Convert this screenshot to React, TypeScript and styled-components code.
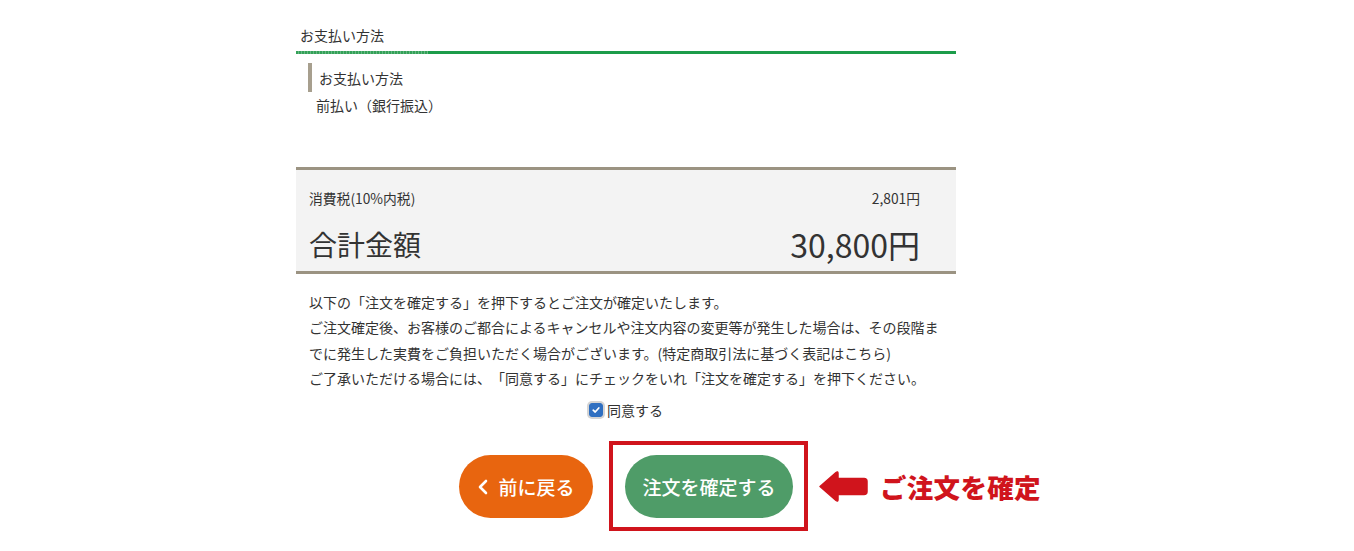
import React, { useState } from "react";
import styled, { createGlobalStyle } from "styled-components";

const GlobalStyle = createGlobalStyle`
  html, body {
    margin: 0;
    padding: 0;
    background: #ffffff;
  }
  body {
    font-family: "Noto Sans CJK JP", "Noto Sans", sans-serif;
    color: #333333;
  }
  * { box-sizing: border-box; }
`;

const Page = styled.div`
  width: 660px;
  margin-left: 296px;
  padding-top: 25px;
  padding-bottom: 30px;
`;

const SectionTitle = styled.div`
  font-size: 14px;
  line-height: 20px;
  padding: 0 4px 6px;
  color: #333;
`;

const TabLine = styled.div`
  position: relative;
  height: 3px;
  background: #1c9c4a;
  &::before {
    content: "";
    position: absolute;
    left: 0;
    top: 0;
    width: 132px;
    height: 3px;
    background: repeating-linear-gradient(90deg, #34a158 0 2px, #66b883 2px 3px);
  }
`;

const PaymentBlock = styled.div`
  padding-top: 9px;
  padding-bottom: 52px;
`;

const SubHeading = styled.div`
  margin-left: 12px;
  border-left: 4px solid #a79f8e;
  padding-left: 7px;
  height: 29px;
  display: flex;
  align-items: center;
  font-size: 14px;
  color: #333;
`;

const PaymentValue = styled.div`
  margin: 3px 0 0 20px;
  font-size: 14px;
  line-height: 20px;
  color: #333;
`;

const Summary = styled.div`
  background: #f3f3f3;
  border-top: 3px solid #9b9382;
  border-bottom: 3px solid #9b9382;
  padding: 18px 36px 7px 13px;
  display: flex;
  flex-direction: column;
  gap: 16px;
`;

const SummaryRow = styled.div`
  display: flex;
  justify-content: space-between;
  align-items: center;
`;

const SmallLabel = styled.span`
  font-size: 13.8px;
  line-height: 20px;
  color: #333;
`;

const BigLabel = styled.span<{ $size: number }>`
  font-size: ${(p) => p.$size}px;
  line-height: 40px;
  color: #333;
`;

const Notice = styled.div`
  padding: 16px 11px 0 13px;
  font-size: 14px;
  line-height: 25.3px;
  color: #333;
  text-spacing-trim: space-all;
  p {
    margin: 0;
  }
`;

const AgreeRow = styled.label`
  display: flex;
  justify-content: center;
  align-items: center;
  gap: 4px;
  margin-top: 9px;
  font-size: 14px;
  line-height: 20px;
  color: #333;
  cursor: pointer;
`;

const CheckBox = styled.span<{ $checked: boolean }>`
  width: 14px;
  height: 14px;
  border-radius: 3px;
  background: ${(p) => (p.$checked ? "#2f6fc1" : "#fff")};
  border: 1px solid ${(p) => (p.$checked ? "#2f6fc1" : "#888")};
  box-shadow: 0 0 0 2px #d4d4d4;
  display: inline-flex;
  align-items: center;
  justify-content: center;
  svg { display: block; }
`;

const Buttons = styled.div`
  display: flex;
  justify-content: center;
  gap: 32px;
  margin-top: 35px;
`;

const Pill = styled.button<{ $bg: string; $w: number }>`
  width: ${(p) => p.$w}px;
  height: 63px;
  border: none;
  border-radius: 32px;
  background: ${(p) => p.$bg};
  color: #ffffff;
  font-family: "Noto Sans CJK JP", "Noto Sans", sans-serif;
  font-size: 19px;
  font-weight: 500;
  display: flex;
  align-items: center;
  justify-content: center;
  gap: 9px;
  cursor: pointer;
  padding: 0;
`;

const ConfirmWrap = styled.div`
  position: relative;
`;

const Highlight = styled.div`
  position: absolute;
  top: -14px;
  left: -16px;
  right: -15px;
  bottom: -13px;
  border: 4px solid #d0141c;
  pointer-events: none;
`;

const Annotation = styled.div`
  position: absolute;
  left: 193px;
  top: 0;
  height: 63px;
  display: flex;
  align-items: center;
  gap: 12px;
  white-space: nowrap;
`;

const AnnotationText = styled.span`
  color: #d0141c;
  font-size: 26.5px;
  font-weight: 900;
  letter-spacing: 0.3px;
`;

export default function App() {
  const [agree, setAgree] = useState(true);
  return (
    <>
      <GlobalStyle />
      <Page>
        <SectionTitle>お支払い方法</SectionTitle>
        <TabLine />
        <PaymentBlock>
          <SubHeading>お支払い方法</SubHeading>
          <PaymentValue>前払い（銀行振込）</PaymentValue>
        </PaymentBlock>
        <Summary>
          <SummaryRow>
            <SmallLabel>消費税(10%内税)</SmallLabel>
            <SmallLabel>2,801円</SmallLabel>
          </SummaryRow>
          <SummaryRow>
            <BigLabel $size={28}>合計金額</BigLabel>
            <BigLabel $size={32}>30,800円</BigLabel>
          </SummaryRow>
        </Summary>
        <Notice>
          <p>以下の「注文を確定する」を押下するとご注文が確定いたします。</p>
          <p>
            ご注文確定後、お客様のご都合によるキャンセルや注文内容の変更等が発生した場合は、その段階までに発生した実費をご負担いただく場合がございます。(特定商取引法に基づく表記はこちら)
          </p>
          <p>ご了承いただける場合には、「同意する」にチェックをいれ「注文を確定する」を押下ください。</p>
        </Notice>
        <AgreeRow onClick={() => setAgree(!agree)}>
          <CheckBox $checked={agree}>
            {agree && (
              <svg width="10" height="10" viewBox="0 0 10 10">
                <path d="M2.2 5.2 L4.2 7 L7.8 3" fill="none" stroke="#fff" strokeWidth="1.7" strokeLinecap="round" strokeLinejoin="round" />
              </svg>
            )}
          </CheckBox>
          同意する
        </AgreeRow>
        <Buttons>
          <Pill $bg="#e8650f" $w={134}>
            <svg width="12" height="16" viewBox="0 0 12 16">
              <path d="M9 2 L3 8 L9 14" fill="none" stroke="#fff" strokeWidth="2.6" strokeLinecap="round" strokeLinejoin="round" />
            </svg>
            前に戻る
          </Pill>
          <ConfirmWrap>
            <Pill $bg="#4f9c68" $w={168}>注文を確定する</Pill>
            <Highlight />
            <Annotation>
              <svg width="50" height="33" viewBox="0 0 50 33">
                <path
                  d="M2 16.5 L18 2.5 Q20 1 20 3.5 L20 8.5 L46 8.5 Q49 8.5 49 11.5 L49 21.5 Q49 24.5 46 24.5 L20 24.5 L20 29.5 Q20 32 18 30.5 Z"
                  fill="#d0141c"
                  stroke="#d0141c"
                  strokeWidth="1.5"
                  strokeLinejoin="round"
                />
              </svg>
              <AnnotationText>ご注文を確定</AnnotationText>
            </Annotation>
          </ConfirmWrap>
        </Buttons>
      </Page>
    </>
  );
}
